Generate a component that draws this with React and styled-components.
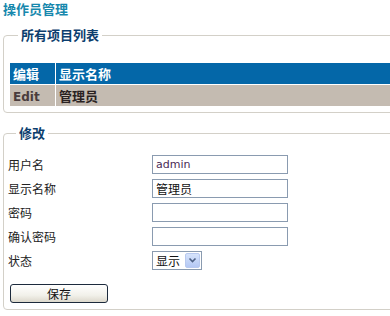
import styled, { createGlobalStyle } from "styled-components"

const GlobalStyle = createGlobalStyle`
    html, body {
        margin: 0;
        padding: 0;
        background: #ffffff;
        overflow: hidden;
    }
    body {
        font-family: "Noto Sans CJK SC", "DejaVu Sans", sans-serif;
        font-size: 12px;
        color: #1a1a1a;
    }
`
const Page = styled.div`
    width: 440px;
    padding: 0 0 0 3px;
`
const Title = styled.h1`
    margin: 0;
    padding-top: 1px;
    height: 16px;
    font-size: 13px;
    line-height: 16px;
    font-weight: bold;
    color: #1788ad;
`
const Box = styled.fieldset`
    margin: ${props => props.$top}px 0 0 0;
    padding: ${props => props.$pad};
    border: 1px solid #d3d0c8;
    border-radius: 4px;
    min-width: 0;
`
const Legend = styled.legend`
    margin-left: 8px;
    padding: 0 3px;
    font-size: 13px;
    line-height: 14px;
    font-weight: bold;
    color: #0c3e6e;
`
const List = styled.table`
    width: 100%;
    border-collapse: collapse;
    td, th {
        padding: 0 0 0 3px;
        text-align: left;
        font-size: 13px;
        font-weight: bold;
    }
    th {
        height: 21px;
        background: #0467a8;
        color: #ffffff;
        border-bottom: 1px solid #ffffff;
    }
    td {
        height: 21px;
        background: #c4bbb1;
        color: #2a2222;
    }
    th:first-child, td:first-child {
        width: 42px;
        border-right: 1px solid #ffffff;
    }
`
const EditLink = styled.span`
    font-family: "DejaVu Sans", Verdana, sans-serif;
    font-size: 12px;
    color: #4a3c3c;
`
const Form = styled.div`
    display: grid;
    grid-template-columns: 144px 136px;
    grid-template-rows: repeat(4, 24px) 22px;
    align-items: start;
`
const Label = styled.label`
    padding-top: 2px;
    font-size: 12px;
    line-height: 16px;
    color: #222222;
`
const Field = styled.input`
    box-sizing: border-box;
    width: 136px;
    height: 19px;
    margin: 0;
    padding: 0 3px;
    border: 1px solid #8a9bb0;
    font-family: ${props => props.$cjk ? `"Noto Sans CJK SC", sans-serif` : `"DejaVu Sans", Verdana, sans-serif`};
    font-size: ${props => props.$cjk ? "12px" : "11px"};
    color: ${props => props.$cjk ? "#111111" : "#4a2a55"};
    outline: none;
`
const Select = styled.div`
    box-sizing: border-box;
    display: flex;
    align-items: center;
    justify-content: space-between;
    width: 50px;
    height: 19px;
    padding: 0 1px 0 3px;
    border: 1px solid #8a9bb0;
    font-size: 12px;
    color: #111111;
`
const Arrow = styled.span`
    display: flex;
    align-items: center;
    justify-content: center;
    width: 15px;
    height: 15px;
    border-radius: 2px;
    background: linear-gradient(#d6e3fb, #b4c8f4);
    border: 1px solid #b8c9ef;
    box-sizing: border-box;
`
const Save = styled.button`
    width: 98px;
    height: 19px;
    margin: 11px 0 0 2px;
    padding: 0;
    border: 1px solid #1c2a3c;
    border-radius: 3px;
    background: linear-gradient(#ffffff, #f2f1ea 60%, #dcd8cc);
    font-family: "Noto Sans CJK SC", sans-serif;
    font-size: 12px;
    line-height: 16px;
    color: #111111;
`

export default function App() {
    return (
        <Page>
            <GlobalStyle />
            <Title>操作员管理</Title>
            <Box $top={11} $pad="21px 0 6px 6px">
                <Legend>所有项目列表</Legend>
                <List>
                    <thead>
                        <tr>
                            <th>编辑</th>
                            <th>显示名称</th>
                        </tr>
                    </thead>
                    <tbody>
                        <tr>
                            <td><EditLink>Edit</EditLink></td>
                            <td>管理员</td>
                        </tr>
                    </tbody>
                </List>
            </Box>
            <Box $top={13} $pad="15px 0 6px 4px">
                <Legend>修改</Legend>
                <Form>
                    <Label>用户名</Label>
                    <Field defaultValue="admin" />
                    <Label>显示名称</Label>
                    <Field $cjk defaultValue="管理员" />
                    <Label>密码</Label>
                    <Field type="password" />
                    <Label>确认密码</Label>
                    <Field type="password" />
                    <Label>状态</Label>
                    <Select>
                        显示
                        <Arrow>
                            <svg width="9" height="7" viewBox="0 0 9 7">
                                <path d="M1.5 1.5 L4.5 4.5 L7.5 1.5" fill="none" stroke="#4d6185" strokeWidth="1.6" />
                            </svg>
                        </Arrow>
                    </Select>
                </Form>
                <Save>保存</Save>
            </Box>
        </Page>
    )
}
